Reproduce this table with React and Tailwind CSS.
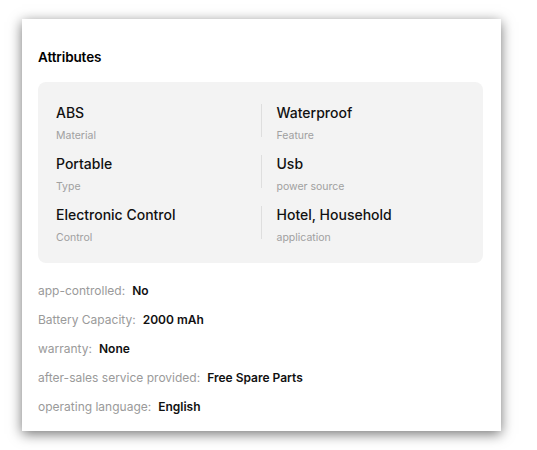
import React from 'react';

const attrs = [
  { value: 'ABS', label: 'Material' },
  { value: 'Waterproof', label: 'Feature' },
  { value: 'Portable', label: 'Type' },
  { value: 'Usb', label: 'power source' },
  { value: 'Electronic Control', label: 'Control' },
  { value: 'Hotel, Household', label: 'application' },
];

const extras = [
  ['app-controlled:', 'No'],
  ['Battery Capacity:', '2000 mAh'],
  ['warranty:', 'None'],
  ['after-sales service provided:', 'Free Spare Parts'],
  ['operating language:', 'English'],
];

const App = () => {
  return (
    <div className="min-h-[450px] w-[537px] bg-white pt-[19px] pl-[22px] font-['Inter',sans-serif]">
      <div className="w-[479px] h-[412px] bg-white shadow-[0_3px_12px_rgba(0,0,0,0.55)] px-4 pt-[31px]">
        <h2 className="text-[13.5px] font-semibold text-black leading-[14px] tracking-[-0.1px]">Attributes</h2>

        <div className="mt-[18px] w-[445px] rounded-lg bg-[#f3f3f3] px-[18px] pt-[22px] pb-[24px] grid grid-cols-2 gap-y-[18px]">
          {attrs.map((a, i) => (
            <div
              key={a.label}
              className={i % 2 === 1 ? 'border-l border-[#dedede] pl-[15px] h-[33px]' : 'h-[33px]'}
            >
              <div className="text-[14px] font-medium text-[#111] leading-[17px]">{a.value}</div>
              <div className="text-[10.5px] text-[#a0a0a0] leading-[13px] mt-[8px]">{a.label}</div>
            </div>
          ))}
        </div>

        <div className="mt-[20px] flex flex-col gap-[14px]">
          {extras.map(([k, v]) => (
            <div key={k} className="flex items-center text-[12px] leading-[15px]">
              <span className="text-[#9a9a9a]">{k}</span>
              <span className="ml-[7px] font-semibold text-[#111]">{v}</span>
            </div>
          ))}
        </div>
      </div>
    </div>
  );
};

export default App;
